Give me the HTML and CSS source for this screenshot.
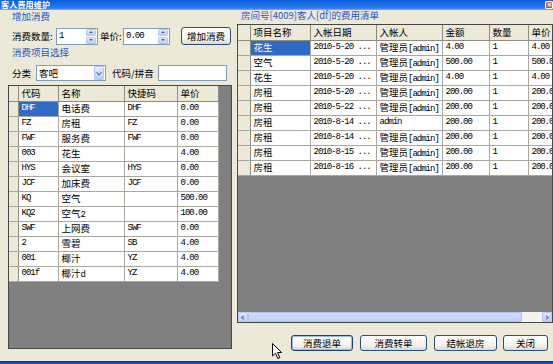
FILE: index.html
```html
<!DOCTYPE html>
<html>
<head>
<meta charset="utf-8">
<link rel="stylesheet" href="styles.css">
</head>
<body>
<div class="titlebar">
  <span class="title">客人费用维护</span>
  <span class="close">✕</span>
</div>
<div class="window">
  <div class="leftcol">
    <div class="gtitle">增加消费</div>
    <div class="row1">
      <span class="lbl">消费数量:</span>
      <div class="spin w42"><span class="m val">1</span><span class="spinbtn"><i class="up"></i><i class="dn"></i></span></div>
      <span class="lbl lbl2">单价:</span>
      <div class="spin w47"><span class="m val">0.00</span><span class="spinbtn"><i class="up"></i><i class="dn"></i></span></div>
      <button class="btn addbtn">增加消费</button>
    </div>
    <div class="gtitle gtitle2">消费项目选择</div>
    <div class="row2">
      <span class="lbl">分类</span>
      <div class="select"><span class="val">客吧</span><span class="dropbtn"><i></i></span></div>
      <span class="lbl lbl3">代码/拼音</span>
      <div class="textbox"></div>
    </div>
    <div class="grid lgrid">
      <table class="tbl ltbl">
        <colgroup><col style="width:9px"><col style="width:40px"><col style="width:66px"><col style="width:53px"><col style="width:41px"></colgroup>
        <tr class="hd"><th class="ind"></th><th>代码</th><th>名称</th><th>快捷码</th><th>单价</th></tr>
        <tr><td class="ind"></td><td class="m sel">DHF</td><td>电话费</td><td class="m">DHF</td><td class="m">0.00</td></tr>
        <tr><td class="ind"></td><td class="m">FZ</td><td>房租</td><td class="m">FZ</td><td class="m">0.00</td></tr>
        <tr><td class="ind"></td><td class="m">FWF</td><td>服务费</td><td class="m">FWF</td><td class="m">0.00</td></tr>
        <tr><td class="ind"></td><td class="m">003</td><td>花生</td><td class="m"></td><td class="m">4.00</td></tr>
        <tr><td class="ind"></td><td class="m">HYS</td><td>会议室</td><td class="m">HYS</td><td class="m">0.00</td></tr>
        <tr><td class="ind"></td><td class="m">JCF</td><td>加床费</td><td class="m">JCF</td><td class="m">0.00</td></tr>
        <tr><td class="ind"></td><td class="m">KQ</td><td>空气</td><td class="m"></td><td class="m">500.00</td></tr>
        <tr><td class="ind"></td><td class="m">KQ2</td><td>空气<span class="m">2</span></td><td class="m"></td><td class="m">100.00</td></tr>
        <tr><td class="ind"></td><td class="m">SWF</td><td>上网费</td><td class="m">SWF</td><td class="m">0.00</td></tr>
        <tr><td class="ind"></td><td class="m">2</td><td>雪碧</td><td class="m">SB</td><td class="m">4.00</td></tr>
        <tr><td class="ind"></td><td class="m">001</td><td>椰汁</td><td class="m">YZ</td><td class="m">4.00</td></tr>
        <tr><td class="ind"></td><td class="m">001f</td><td>椰汁<span class="m">d</span></td><td class="m">YZ</td><td class="m">4.00</td></tr>
      </table>
      <div class="fill"></div>
    </div>
  </div>
  <div class="rightcol">
    <div class="gtitle rtitle">房间号[4009]客人[df]的费用清单</div>
    <div class="grid rgrid">
      <div class="clip">
      <table class="tbl rtbl">
        <colgroup><col style="width:12px"><col style="width:60px"><col style="width:66px"><col style="width:66px"><col style="width:47px"><col style="width:39px"><col style="width:60px"></colgroup>
        <tr class="hd"><th class="ind"></th><th>项目名称</th><th>入帐日期</th><th>入帐人</th><th>金额</th><th>数量</th><th>单价</th></tr>
        <tr><td class="ind"></td><td class="sel">花生</td><td class="m">2010-5-20 ...</td><td>管理员<span class="m">[admin]</span></td><td class="m">4.00</td><td class="m">1</td><td class="m">4.00</td></tr>
        <tr><td class="ind"></td><td>空气</td><td class="m">2010-5-20 ...</td><td>管理员<span class="m">[admin]</span></td><td class="m">500.00</td><td class="m">1</td><td class="m">500.00</td></tr>
        <tr><td class="ind"></td><td>花生</td><td class="m">2010-5-20 ...</td><td>管理员<span class="m">[admin]</span></td><td class="m">4.00</td><td class="m">1</td><td class="m">4.00</td></tr>
        <tr><td class="ind"></td><td>房租</td><td class="m">2010-5-20 ...</td><td>管理员<span class="m">[admin]</span></td><td class="m">200.00</td><td class="m">1</td><td class="m">200.00</td></tr>
        <tr><td class="ind"></td><td>房租</td><td class="m">2010-5-22 ...</td><td>管理员<span class="m">[admin]</span></td><td class="m">200.00</td><td class="m">1</td><td class="m">200.00</td></tr>
        <tr><td class="ind"></td><td>房租</td><td class="m">2010-8-14 ...</td><td class="m">admin</td><td class="m">200.00</td><td class="m">1</td><td class="m">200.00</td></tr>
        <tr><td class="ind"></td><td>房租</td><td class="m">2010-8-14 ...</td><td>管理员<span class="m">[admin]</span></td><td class="m">200.00</td><td class="m">1</td><td class="m">200.00</td></tr>
        <tr><td class="ind"></td><td>房租</td><td class="m">2010-8-15 ...</td><td>管理员<span class="m">[admin]</span></td><td class="m">200.00</td><td class="m">1</td><td class="m">200.00</td></tr>
        <tr><td class="ind"></td><td>房租</td><td class="m">2010-8-16 ...</td><td>管理员<span class="m">[admin]</span></td><td class="m">200.00</td><td class="m">1</td><td class="m">200.00</td></tr>
      </table>
      </div>
      <div class="fill"></div>
      <div class="hscroll">
        <span class="sbtn"><i class="la"></i></span>
        <span class="thumb"></span>
        <span class="track"></span>
        <span class="sbtn"><i class="ra"></i></span>
      </div>
    </div>
    <div class="btnrow">
      <button class="btn b1 def">消费退单</button>
      <button class="btn b2">消费转单</button>
      <button class="btn b3">结帐退房</button>
      <button class="btn b4">关闭</button>
    </div>
  </div>
</div>
<div class="frame-bottom"></div>
<svg class="cursor" width="12" height="17" viewBox="0 0 12 17"><path d="M0.5 0.5 L0.5 13 L3.5 10.2 L5.8 15.5 L7.8 14.6 L5.6 9.5 L9.6 9.5 Z" fill="#fff" stroke="#000" stroke-width="1"/></svg>
</body>
</html>
```
FILE: styles.css
```css
* { box-sizing: border-box; }
html, body { margin: 0; padding: 0; }
body {
  width: 553px; height: 364px; overflow: hidden;
  background: #ECE9D8;
  font-family: "Noto Sans CJK SC", "Noto Sans CJK JP", sans-serif;
  font-size: 9.5px; color: #000;
  display: flex; flex-direction: column;
  position: relative;
}
.m { font-family: "Liberation Mono", monospace; font-size: 9px; letter-spacing: -1px; }

.titlebar {
  height: 10px; flex: none;
  background: linear-gradient(#0B5EDA, #2A7AF0 80%, #7FA8EE);
  display: flex; justify-content: space-between; align-items: center;
  color: #fff; font-weight: bold; font-size: 8px; line-height: 10px;
}
.title { padding-left: 1px; letter-spacing: 0.2px; }
.close {
  width: 8px; height: 8px;
  background: linear-gradient(#E8765A, #C9462A);
  border: 1px solid #fff; border-radius: 1px;
  font-size: 6px; line-height: 6px; text-align: center; color: #fff;
}

.window { flex: 1; display: flex; min-height: 0; }
.frame-bottom { height: 3px; flex: none; background: linear-gradient(#0A2D8F, #1C5BE0); }

.leftcol {
  width: 235px; flex: none;
  display: flex; flex-direction: column;
  padding: 1px 0 12px 8px;
}
.gtitle { height: 10px; line-height: 10px; margin-left: 4px; color: #2A55C4; white-space: nowrap; }
.gtitle2 { margin-top: 2px; }
.row1 { margin-top: 6px; height: 18px; display: flex; align-items: center; padding-left: 4px; }
.row2 { margin-top: 8px; height: 16px; display: flex; align-items: center; padding-left: 4px; }
.lbl { white-space: nowrap; }
.row1 .lbl { width: 44px; }
.row1 .lbl2 { width: 23px; margin-left: 2px; }
.row2 .lbl { width: 24px; }
.row2 .lbl3 { width: 46px; margin-left: 6px; }

.spin, .select, .textbox {
  height: 17px; background: #fff; border: 1px solid #7F9DB9;
  display: flex; align-items: center; position: relative;
}
.w42 { width: 42px; }
.w47 { width: 47px; }
.val { padding-left: 2px; flex: 1; }
.spinbtn { width: 10px; height: 15px; margin-right: 1px; display: flex; flex-direction: column; gap: 1px; }
.spinbtn i {
  flex: 1; background: linear-gradient(#E2EBFD, #B9CDF6); border: 1px solid #B4C8F2; border-radius: 1px;
  position: relative;
}
.spinbtn i::after {
  content: ""; position: absolute; left: 2px; top: 1px;
  border-left: 2px solid transparent; border-right: 2px solid transparent;
}
.spinbtn .up::after { border-bottom: 2px solid #4D6185; }
.spinbtn .dn::after { border-top: 2px solid #4D6185; }

.select { width: 70px; height: 16px; }
.dropbtn {
  width: 10px; height: 14px; margin-right: 1px;
  background: linear-gradient(#E2EBFD, #B9CDF6); border: 1px solid #B4C8F2; border-radius: 1px;
  position: relative;
}
.dropbtn i {
  position: absolute; left: 2px; top: 5px; width: 4px; height: 4px;
  border-right: 1.5px solid #4D6185; border-bottom: 1.5px solid #4D6185; transform: rotate(45deg) translate(-1px,-1px);
}
.textbox { width: 69px; height: 16px; }

.btn {
  font-family: "Noto Sans CJK SC", sans-serif; font-size: 9.5px; color: #000;
  border: 1px solid #2B4E7C; border-radius: 3px;
  background: linear-gradient(#FFFFFF, #F2F1EC 70%, #DCD8CC);
  padding: 0; height: 16px; line-height: 13px;
}
.addbtn { width: 50px; height: 18px; margin-left: 11px; }
.def { box-shadow: inset 0 0 0 1px #9CB8EC; border-color: #1C3F7A; }

.grid {
  border: 1px solid #474747; background: #808080;
  display: flex; flex-direction: column; overflow: hidden;
}
.lgrid { margin-top: 4px; width: 224px; flex: 1; }
.fill { flex: 1; }

.tbl { border-collapse: collapse; table-layout: fixed; background: #fff; }
.ltbl { width: 209px; }
.tbl tr { height: 15px; }
.tbl th, .tbl td {
  height: 15px; padding: 0 0 0 3px; white-space: nowrap; overflow: hidden;
  text-align: left; font-weight: normal; line-height: 13px; vertical-align: middle;
  border-right: 1px solid #A9A89F; border-bottom: 1px solid #A9A89F;
}
.tbl td span.m { line-height: 9px; vertical-align: baseline; }
.tbl th { background: #ECE9D8; border-right-color: #8E8C80; border-bottom-color: #8E8C80; }
.tbl .ind { background: #ECE9D8; padding: 0; border-right-color: #8E8C80; }
.tbl td.sel { background: #316AC5; color: #fff; }

.rightcol { flex: 1; display: flex; flex-direction: column; min-width: 0; }
.rtitle { margin-top: 0; margin-left: 6px; }
.rgrid { margin-top: 4px; margin-left: 2px; width: 316px; height: 299px; flex: none; }
.clip { overflow: hidden; }
.rtbl { width: 350px; }

.hscroll { height: 10px; flex: none; display: flex; background: #F4F3EE; }
.sbtn {
  width: 10px; height: 10px; background: linear-gradient(#DDE7FC, #BBCEF5);
  border: 1px solid #B4C8F2; border-radius: 1px; position: relative; flex: none;
}
.sbtn i { position: absolute; top: 3px; width: 3px; height: 3px; border-left: 1.5px solid #4D6185; border-bottom: 1.5px solid #4D6185; }
.sbtn .la { left: 3px; transform: rotate(45deg); }
.sbtn .ra { left: 2px; transform: rotate(-135deg); }
.thumb { width: 274px; background: linear-gradient(#CFDDFB, #BCD0F8); border: 1px solid #ABC3F2; border-radius: 1px; flex: none; }
.track { flex: 1; }

.btnrow { margin-top: 12px; height: 16px; display: flex; padding-left: 56px; }
.b1 { width: 62px; }
.b2 { width: 67px; margin-left: 7px; }
.b3 { width: 63px; margin-left: 7px; }
.b4 { width: 45px; margin-left: 6px; }

.cursor { position: absolute; left: 272px; top: 343px; }
```
